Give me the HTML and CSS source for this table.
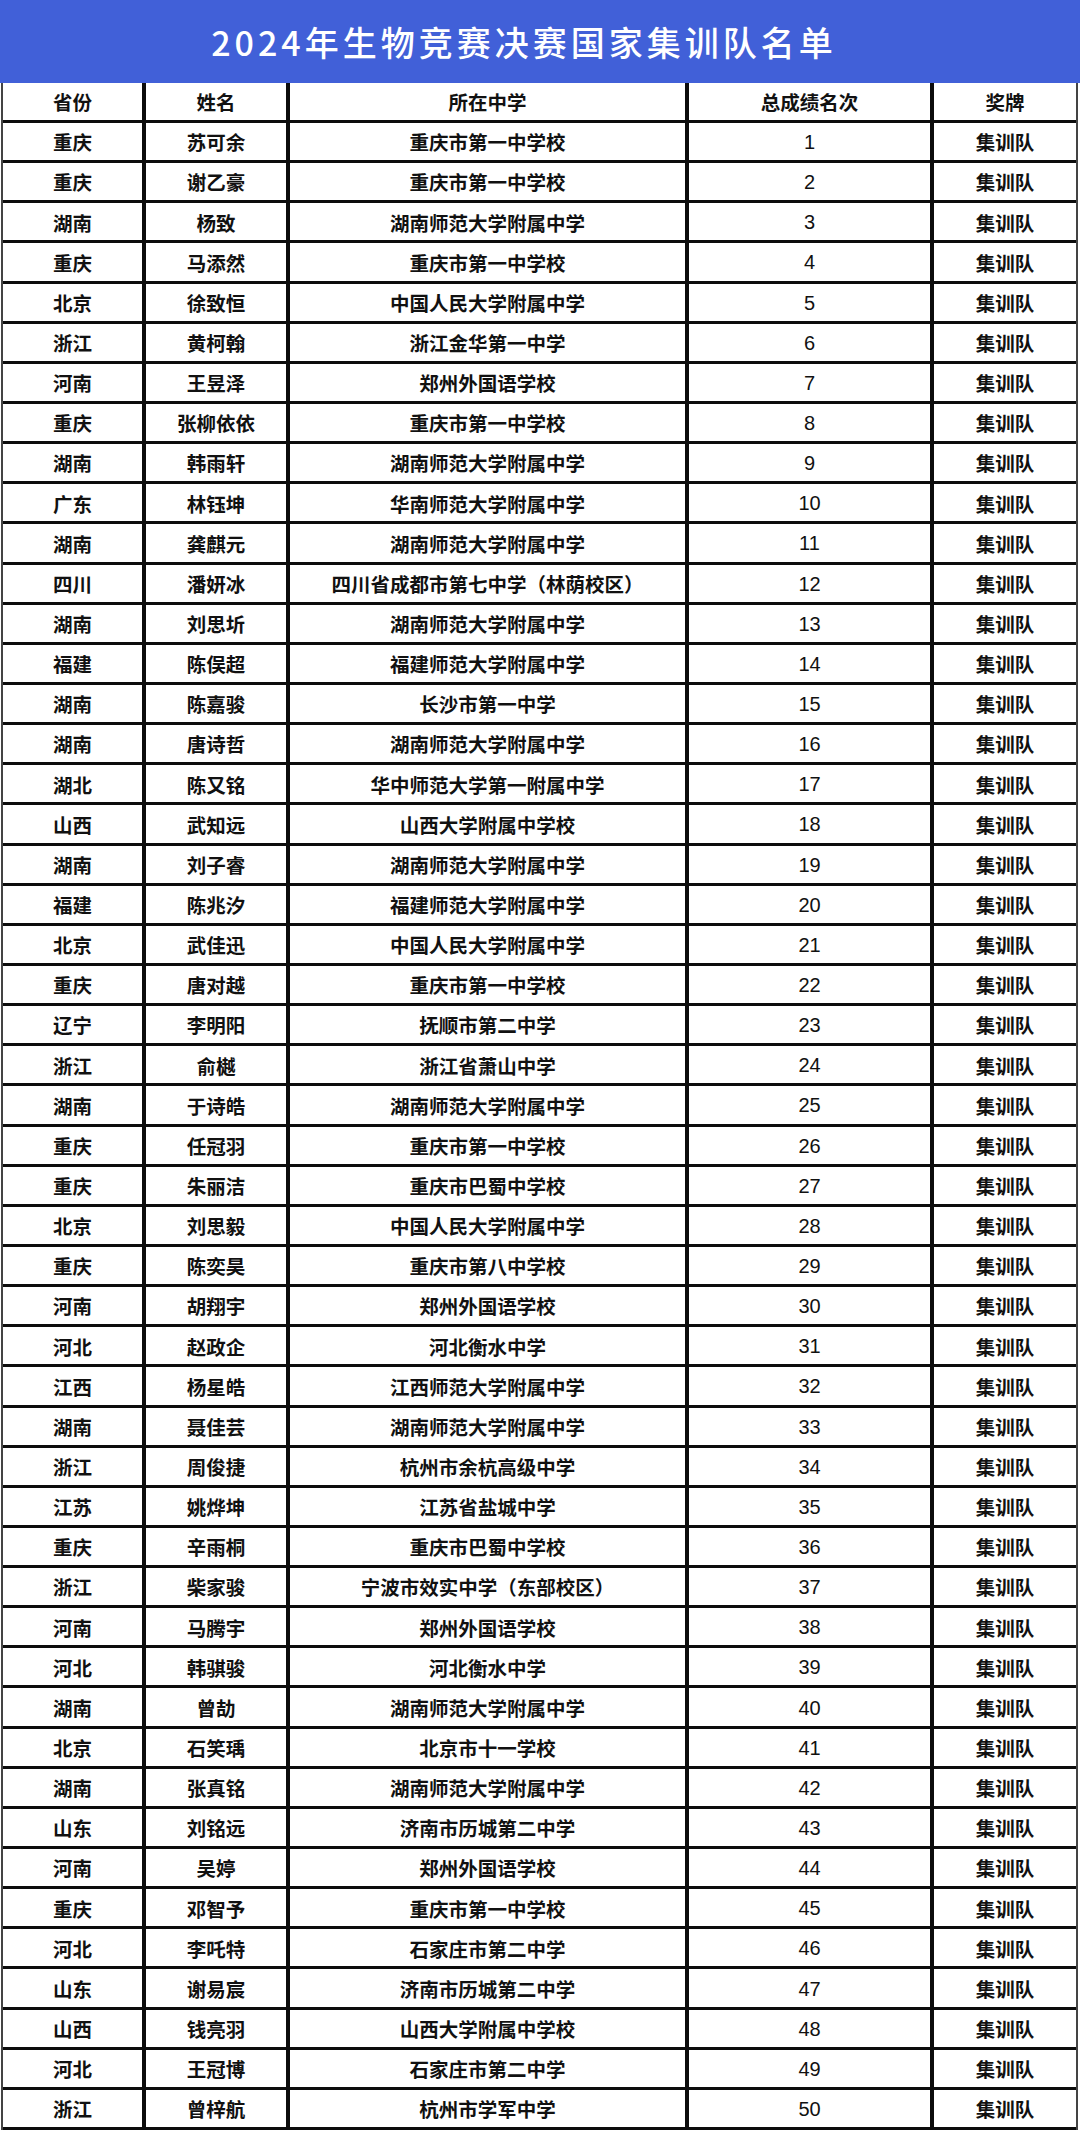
FILE: index.html
```html
<!DOCTYPE html>
<html lang="zh-CN">
<head>
<meta charset="utf-8">
<title>2024年生物竞赛决赛国家集训队名单</title>
<link rel="stylesheet" href="styles.css">
</head>
<body>
<header class="banner"><h1 class="title">2024年生物竞赛决赛国家集训队名单</h1></header>
<div class="table">
<div class="row head"><div class="c">省份</div><div class="c">姓名</div><div class="c">所在中学</div><div class="c">总成绩名次</div><div class="c">奖牌</div></div>
<div class="row"><div class="c p">重庆</div><div class="c n">苏可余</div><div class="c s">重庆市第一中学校</div><div class="c r">1</div><div class="c m">集训队</div></div>
<div class="row"><div class="c p">重庆</div><div class="c n">谢乙豪</div><div class="c s">重庆市第一中学校</div><div class="c r">2</div><div class="c m">集训队</div></div>
<div class="row"><div class="c p">湖南</div><div class="c n">杨致</div><div class="c s">湖南师范大学附属中学</div><div class="c r">3</div><div class="c m">集训队</div></div>
<div class="row"><div class="c p">重庆</div><div class="c n">马添然</div><div class="c s">重庆市第一中学校</div><div class="c r">4</div><div class="c m">集训队</div></div>
<div class="row"><div class="c p">北京</div><div class="c n">徐致恒</div><div class="c s">中国人民大学附属中学</div><div class="c r">5</div><div class="c m">集训队</div></div>
<div class="row"><div class="c p">浙江</div><div class="c n">黄柯翰</div><div class="c s">浙江金华第一中学</div><div class="c r">6</div><div class="c m">集训队</div></div>
<div class="row"><div class="c p">河南</div><div class="c n">王昱泽</div><div class="c s">郑州外国语学校</div><div class="c r">7</div><div class="c m">集训队</div></div>
<div class="row"><div class="c p">重庆</div><div class="c n">张柳依依</div><div class="c s">重庆市第一中学校</div><div class="c r">8</div><div class="c m">集训队</div></div>
<div class="row"><div class="c p">湖南</div><div class="c n">韩雨轩</div><div class="c s">湖南师范大学附属中学</div><div class="c r">9</div><div class="c m">集训队</div></div>
<div class="row"><div class="c p">广东</div><div class="c n">林钰坤</div><div class="c s">华南师范大学附属中学</div><div class="c r">10</div><div class="c m">集训队</div></div>
<div class="row"><div class="c p">湖南</div><div class="c n">龚麒元</div><div class="c s">湖南师范大学附属中学</div><div class="c r">11</div><div class="c m">集训队</div></div>
<div class="row"><div class="c p">四川</div><div class="c n">潘妍冰</div><div class="c s">四川省成都市第七中学（林荫校区）</div><div class="c r">12</div><div class="c m">集训队</div></div>
<div class="row"><div class="c p">湖南</div><div class="c n">刘思圻</div><div class="c s">湖南师范大学附属中学</div><div class="c r">13</div><div class="c m">集训队</div></div>
<div class="row"><div class="c p">福建</div><div class="c n">陈俣超</div><div class="c s">福建师范大学附属中学</div><div class="c r">14</div><div class="c m">集训队</div></div>
<div class="row"><div class="c p">湖南</div><div class="c n">陈嘉骏</div><div class="c s">长沙市第一中学</div><div class="c r">15</div><div class="c m">集训队</div></div>
<div class="row"><div class="c p">湖南</div><div class="c n">唐诗哲</div><div class="c s">湖南师范大学附属中学</div><div class="c r">16</div><div class="c m">集训队</div></div>
<div class="row"><div class="c p">湖北</div><div class="c n">陈又铭</div><div class="c s">华中师范大学第一附属中学</div><div class="c r">17</div><div class="c m">集训队</div></div>
<div class="row"><div class="c p">山西</div><div class="c n">武知远</div><div class="c s">山西大学附属中学校</div><div class="c r">18</div><div class="c m">集训队</div></div>
<div class="row"><div class="c p">湖南</div><div class="c n">刘子睿</div><div class="c s">湖南师范大学附属中学</div><div class="c r">19</div><div class="c m">集训队</div></div>
<div class="row"><div class="c p">福建</div><div class="c n">陈兆汐</div><div class="c s">福建师范大学附属中学</div><div class="c r">20</div><div class="c m">集训队</div></div>
<div class="row"><div class="c p">北京</div><div class="c n">武佳迅</div><div class="c s">中国人民大学附属中学</div><div class="c r">21</div><div class="c m">集训队</div></div>
<div class="row"><div class="c p">重庆</div><div class="c n">唐对越</div><div class="c s">重庆市第一中学校</div><div class="c r">22</div><div class="c m">集训队</div></div>
<div class="row"><div class="c p">辽宁</div><div class="c n">李明阳</div><div class="c s">抚顺市第二中学</div><div class="c r">23</div><div class="c m">集训队</div></div>
<div class="row"><div class="c p">浙江</div><div class="c n">俞樾</div><div class="c s">浙江省萧山中学</div><div class="c r">24</div><div class="c m">集训队</div></div>
<div class="row"><div class="c p">湖南</div><div class="c n">于诗皓</div><div class="c s">湖南师范大学附属中学</div><div class="c r">25</div><div class="c m">集训队</div></div>
<div class="row"><div class="c p">重庆</div><div class="c n">任冠羽</div><div class="c s">重庆市第一中学校</div><div class="c r">26</div><div class="c m">集训队</div></div>
<div class="row"><div class="c p">重庆</div><div class="c n">朱丽洁</div><div class="c s">重庆市巴蜀中学校</div><div class="c r">27</div><div class="c m">集训队</div></div>
<div class="row"><div class="c p">北京</div><div class="c n">刘思毅</div><div class="c s">中国人民大学附属中学</div><div class="c r">28</div><div class="c m">集训队</div></div>
<div class="row"><div class="c p">重庆</div><div class="c n">陈奕昊</div><div class="c s">重庆市第八中学校</div><div class="c r">29</div><div class="c m">集训队</div></div>
<div class="row"><div class="c p">河南</div><div class="c n">胡翔宇</div><div class="c s">郑州外国语学校</div><div class="c r">30</div><div class="c m">集训队</div></div>
<div class="row"><div class="c p">河北</div><div class="c n">赵政企</div><div class="c s">河北衡水中学</div><div class="c r">31</div><div class="c m">集训队</div></div>
<div class="row"><div class="c p">江西</div><div class="c n">杨星皓</div><div class="c s">江西师范大学附属中学</div><div class="c r">32</div><div class="c m">集训队</div></div>
<div class="row"><div class="c p">湖南</div><div class="c n">聂佳芸</div><div class="c s">湖南师范大学附属中学</div><div class="c r">33</div><div class="c m">集训队</div></div>
<div class="row"><div class="c p">浙江</div><div class="c n">周俊捷</div><div class="c s">杭州市余杭高级中学</div><div class="c r">34</div><div class="c m">集训队</div></div>
<div class="row"><div class="c p">江苏</div><div class="c n">姚烨坤</div><div class="c s">江苏省盐城中学</div><div class="c r">35</div><div class="c m">集训队</div></div>
<div class="row"><div class="c p">重庆</div><div class="c n">辛雨桐</div><div class="c s">重庆市巴蜀中学校</div><div class="c r">36</div><div class="c m">集训队</div></div>
<div class="row"><div class="c p">浙江</div><div class="c n">柴家骏</div><div class="c s">宁波市效实中学（东部校区）</div><div class="c r">37</div><div class="c m">集训队</div></div>
<div class="row"><div class="c p">河南</div><div class="c n">马腾宇</div><div class="c s">郑州外国语学校</div><div class="c r">38</div><div class="c m">集训队</div></div>
<div class="row"><div class="c p">河北</div><div class="c n">韩骐骏</div><div class="c s">河北衡水中学</div><div class="c r">39</div><div class="c m">集训队</div></div>
<div class="row"><div class="c p">湖南</div><div class="c n">曾劼</div><div class="c s">湖南师范大学附属中学</div><div class="c r">40</div><div class="c m">集训队</div></div>
<div class="row"><div class="c p">北京</div><div class="c n">石笑瑀</div><div class="c s">北京市十一学校</div><div class="c r">41</div><div class="c m">集训队</div></div>
<div class="row"><div class="c p">湖南</div><div class="c n">张真铭</div><div class="c s">湖南师范大学附属中学</div><div class="c r">42</div><div class="c m">集训队</div></div>
<div class="row"><div class="c p">山东</div><div class="c n">刘铭远</div><div class="c s">济南市历城第二中学</div><div class="c r">43</div><div class="c m">集训队</div></div>
<div class="row"><div class="c p">河南</div><div class="c n">吴婷</div><div class="c s">郑州外国语学校</div><div class="c r">44</div><div class="c m">集训队</div></div>
<div class="row"><div class="c p">重庆</div><div class="c n">邓智予</div><div class="c s">重庆市第一中学校</div><div class="c r">45</div><div class="c m">集训队</div></div>
<div class="row"><div class="c p">河北</div><div class="c n">李吒特</div><div class="c s">石家庄市第二中学</div><div class="c r">46</div><div class="c m">集训队</div></div>
<div class="row"><div class="c p">山东</div><div class="c n">谢易宸</div><div class="c s">济南市历城第二中学</div><div class="c r">47</div><div class="c m">集训队</div></div>
<div class="row"><div class="c p">山西</div><div class="c n">钱亮羽</div><div class="c s">山西大学附属中学校</div><div class="c r">48</div><div class="c m">集训队</div></div>
<div class="row"><div class="c p">河北</div><div class="c n">王冠博</div><div class="c s">石家庄市第二中学</div><div class="c r">49</div><div class="c m">集训队</div></div>
<div class="row"><div class="c p">浙江</div><div class="c n">曾梓航</div><div class="c s">杭州市学军中学</div><div class="c r">50</div><div class="c m">集训队</div></div>
</div>
</body>
</html>
```
FILE: styles.css
```css
html, body {
  margin: 0;
  padding: 0;
  background: #ffffff;
}
body {
  width: 1080px;
  height: 2133px;
  overflow: hidden;
  font-family: "Noto Sans CJK SC", "Noto Sans", sans-serif;
  color: #111111;
}
.banner {
  height: 83px;
  background: #4160d8;
  display: flex;
  align-items: center;
  justify-content: center;
  padding-right: 32px;
  box-sizing: border-box;
}
.title {
  margin: 0;
  color: #ffffff;
  font-family: "Noto Sans CJK SC", "Noto Sans", sans-serif;
  font-size: 34px;
  font-weight: 500;
  letter-spacing: 4px;
  line-height: 1;
}
.table {
  margin-left: 1px;
  width: 1077px;
  border-left: 2px solid #444;
  border-right: 2px solid #444;
  box-sizing: border-box;
}
.row {
  display: grid;
  grid-template-columns: 143px 144px 399px 245px 142px;
  height: 40.15px;
}
.row.head {
  height: 40px;
}
.c {
  display: flex;
  align-items: center;
  justify-content: center;
  border-bottom: 3px solid #0c0c0c;
  border-right: 4px solid #0c0c0c;
  font-size: 19.5px;
  font-weight: 700;
  line-height: 1;
  white-space: nowrap;
  padding-top: 1px;
}
.c:last-child {
  border-right: none;
}
.c.s {
  font-weight: 600;
}
.c.r {
  font-family: "Liberation Sans", Arial, sans-serif;
  font-weight: 400;
  font-size: 20px;
}
```
